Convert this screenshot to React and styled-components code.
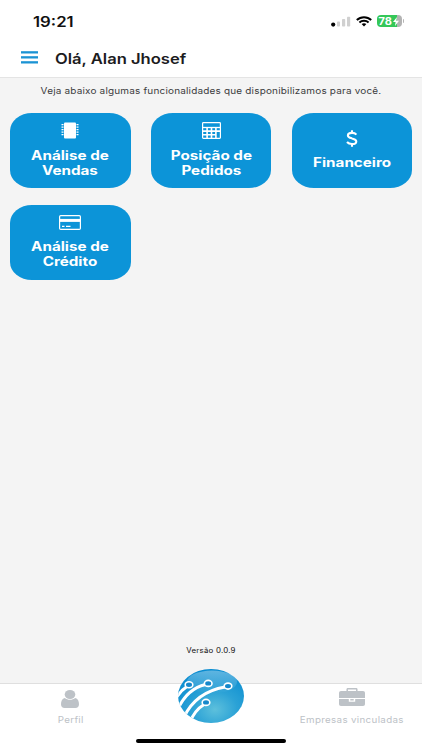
import React from "react"
import styled, { createGlobalStyle } from "styled-components"

const GlobalStyle = createGlobalStyle`
  body {
    margin: 0;
    font-family: Inter, "Liberation Sans", sans-serif;
  }

  * {
    box-sizing: border-box;
  }

  svg {
    display: block;
  }
`

const Screen = styled.div`
  width: 422px;
  height: 750px;
  display: flex;
  flex-direction: column;
  overflow: hidden;
  background: #f4f4f4;
`

const Wide = styled.span`
  display: block;
  white-space: nowrap;
  transform: scaleX(${p => p.$by || 1.217});
  transform-origin: ${p => p.$from || "center"};
`

const Header = styled.header`
  height: 78px;
  background: #fff;
  border-bottom: 1px solid #e4e4e4;
`

const StatusBar = styled.div`
  height: 41px;
  padding: 1px 18px 0 33px;
  display: flex;
  align-items: center;
  justify-content: space-between;
`

const Time = styled.div`
  font-size: 14.2px;
  font-weight: 600;
  color: #111;
`

const StatusIcons = styled.div`
  display: flex;
  align-items: center;
  gap: 5px;
`

const Battery = styled.div`
  display: flex;
  align-items: center;
  gap: 1px;

  &::after {
    content: "";
    width: 1.5px;
    height: 4px;
    border-radius: 0 2px 2px 0;
    background: #b5b5b5;
  }
`

const Charge = styled.div`
  width: 25px;
  height: 12px;
  border-radius: 4px;
  background: linear-gradient(90deg, #34c759 78%, #b3b3b3 78%);
  color: #fff;
  font-size: 10px;
  font-weight: 700;
  display: flex;
  align-items: center;
  justify-content: center;
  gap: 1px;
`

const TitleBar = styled.div`
  height: 36px;
  padding-left: 21px;
  display: flex;
  align-items: center;
  gap: 17px;

  svg {
    margin-bottom: 3px;
  }
`

const Title = styled.h1`
  margin: 0;
  font-size: 14.3px;
  line-height: 20px;
  font-weight: 600;
  color: #1c1c1e;
`

const Main = styled.main`
  flex: 1;
  display: flex;
  flex-direction: column;
`

const Intro = styled.p`
  margin: 6px 0 14.5px;
  line-height: 14px;
  font-size: 8.6px;
  letter-spacing: 0.15px;
  text-align: center;
  color: #3c3c3e;
`

const Grid = styled.div`
  padding: 0 10px;
  display: grid;
  grid-template-columns: repeat(3, 120.5px);
  justify-content: space-between;
  row-gap: 17px;
`

const Card = styled.button`
  height: 75px;
  padding: 0;
  border: none;
  border-radius: 22px / 18px;
  background: #0c94d8;
  color: #fff;
  font-family: inherit;
  font-size: 12.5px;
  line-height: 15px;
  font-weight: 700;
  display: flex;
  flex-direction: column;
  align-items: center;
  justify-content: center;
  gap: 8.5px;
  cursor: pointer;
`

const Version = styled.div`
  margin-top: auto;
  padding-bottom: 26px;
  line-height: 12px;
  font-size: 7.1px;
  letter-spacing: 0.2px;
  text-align: center;
  color: #111;
`

const TabBar = styled.nav`
  height: 67px;
  background: #fff;
  border-top: 1px solid #dfdfdf;
  display: grid;
  grid-template-columns: repeat(3, 1fr);
  grid-template-rows: 55px 4px;
`

const Tab = styled.div`
  padding-bottom: 13px;
  display: flex;
  flex-direction: column;
  align-items: center;
  justify-content: flex-end;
  gap: ${p => p.$gap}px;
  color: #bdc2c7;
  font-size: 8.8px;
  line-height: 13px;
  letter-spacing: 0.3px;
`

const LogoTab = styled.div`
  margin-top: -16px;
  display: flex;
  justify-content: center;
`

const HomeIndicator = styled.div`
  grid-column: 1 / -1;
  justify-self: center;
  width: 150px;
  height: 4px;
  border-radius: 3px;
  background: #000;
`

const Signal = () => (
  <svg width="20" height="11" viewBox="0 0 20 11">
    <circle cx="2.2" cy="8.6" r="2.1" fill="#000" />
    <rect x="6" y="5.5" width="3" height="5" rx="0.8" fill="#d0d0d0" />
    <rect x="11" y="3" width="3.2" height="7.5" rx="0.8" fill="#d0d0d0" />
    <rect x="16" y="0.8" width="3.2" height="9.7" rx="0.8" fill="#d0d0d0" />
  </svg>
)

const Wifi = () => (
  <svg width="16" height="11" viewBox="0 0 16 11" fill="none" stroke="#000" strokeWidth="2">
    <path d="M0.8 4 C4.8 0.2 11.2 0.2 15.2 4" />
    <path d="M3.4 6.5 C6 4.2 10 4.2 12.6 6.5" />
    <path d="M5.6 8.1 Q8 6.2 10.4 8.1 L8 10.4 Z" fill="#000" stroke="none" />
  </svg>
)

const Bolt = () => (
  <svg width="6" height="9" viewBox="0 0 6 9" fill="#fff">
    <path d="M4 0 L0 5 H2.6 L2 9 L6 3.8 H3.3 Z" />
  </svg>
)

const Menu = () => (
  <svg width="17" height="13" viewBox="0 0 17 13" fill="#1b93d4">
    <rect y="0.2" width="17" height="2.3" />
    <rect y="5.2" width="17" height="2.3" />
    <rect y="10.2" width="17" height="2.3" />
  </svg>
)

const Chip = () => (
  <svg width="18" height="17" viewBox="0 0 18 17" fill="#fff">
    <rect x="3" y="0.5" width="12" height="16" rx="1" />
    {[2.2, 4.7, 7.2, 9.7, 12.2].map(y => (
      <path key={y} d={`M0.5 ${y + 0.5} H2.5 M15.5 ${y + 0.5} H17.5`} stroke="#fff" strokeWidth="1.3" />
    ))}
  </svg>
)

const Calculator = () => (
  <svg width="19" height="17" viewBox="0 0 19 17" fill="none" stroke="#fff">
    <rect x="0.6" y="0.6" width="17.8" height="15.8" rx="0.8" strokeWidth="1.2" />
    <path d="M0.6 5.5 H18.4" strokeWidth="1.3" />
    <path d="M5.1 5.5 V16 M9.5 5.5 V16 M13.9 5.5 V16" strokeWidth="1.6" />
    <path d="M0.6 9.1 H18.4 M0.6 12.8 H13.9" strokeWidth="1.6" />
  </svg>
)

const Dollar = () => (
  <svg width="12" height="17" viewBox="0 0 12 17" fill="none" stroke="#fff" strokeWidth="2.1">
    <path d="M10.4 4.6 C9.3 3.3 7.8 2.9 6 2.9 C3.4 2.9 1.9 3.9 1.9 5.5 C1.9 7.4 3.7 7.8 6 8.4 C8.6 9 10.3 9.6 10.3 11.4 C10.3 13.1 8.6 14 6 14 C3.9 14 2.2 13.4 1 12" />
    <path d="M6 0.3 V3 M6 14 V16.7" />
  </svg>
)

const CreditCard = () => (
  <svg width="22" height="15" viewBox="0 0 22 15" fill="none" stroke="#fff">
    <rect x="0.6" y="0.6" width="20.8" height="13.8" rx="1.2" strokeWidth="1.2" />
    <path d="M0.6 5.4 H21.4" strokeWidth="3" />
    <path d="M3 11.4 H5.5 M7 11.4 H11.5" strokeWidth="1.2" />
  </svg>
)

const Person = () => (
  <svg width="18" height="18" viewBox="0 0 18 18" fill="#bdc2c7">
    <path d="M3.8 8 C1 8.7 0 11.3 0 14.3 C0 16.7 1.3 18 3.6 18 H14.4 C16.7 18 18 16.7 18 14.3 C18 11.3 17 8.7 14.2 8 C12.8 9.1 11 9.8 9 9.8 C7 9.8 5.2 9.1 3.8 8 Z" />
    <ellipse cx="9" cy="4.5" rx="5.3" ry="4.5" />
  </svg>
)

const Briefcase = () => (
  <svg width="26" height="18" viewBox="0 0 26 18">
    <path d="M8.2 3.5 V1.3 Q8.2 0.7 9 0.7 H17 Q17.8 0.7 17.8 1.3 V3.5" fill="none" stroke="#bdc2c7" strokeWidth="1.5" />
    <path d="M2 3 H24 Q26 3 26 4.8 V9.9 H0 V4.8 Q0 3 2 3 Z M0 10.9 H9.8 V13.7 H16.2 V10.9 H26 V16.3 Q26 18 24 18 H2 Q0 18 0 16.3 Z M11.3 10.9 H14.7 V12.5 H11.3 Z" fill="#bdc2c7" />
  </svg>
)

const Logo = () => (
  <svg width="68" height="56" viewBox="0 0 68 56">
    <defs>
      <radialGradient id="globe" cx="0.56" cy="0.75" r="0.75">
        <stop offset="0" stopColor="#5dc0dc" />
        <stop offset="0.45" stopColor="#2ba2d6" />
        <stop offset="1" stopColor="#078bd0" />
      </radialGradient>
      <linearGradient id="shine" x2="0" y2="1">
        <stop offset="0" stopColor="#fff" stopOpacity="0.35" />
        <stop offset="1" stopColor="#fff" stopOpacity="0" />
      </linearGradient>
      <clipPath id="disc">
        <ellipse cx="34" cy="28" rx="33" ry="27" />
      </clipPath>
    </defs>
    <ellipse cx="34" cy="28" rx="33" ry="27" fill="url(#globe)" />
    <ellipse cx="35" cy="14" rx="25" ry="11.5" fill="url(#shine)" />
    <g clipPath="url(#disc)" fill="none" stroke="#fff">
      <path d="M-2 32 Q3 23 10 18.5" strokeWidth="2.8" />
      <path d="M1 41 Q10 21 28.5 16.5" strokeWidth="3" />
      <path d="M7 49 Q19 24 48 19" strokeWidth="3.1" />
      <path d="M13 54 Q18 42 27 36.5" strokeWidth="3" />
    </g>
    <g fill="#1688cb" stroke="#fff" strokeWidth="1.6">
      <ellipse cx="12" cy="16.8" rx="3.8" ry="3" />
      <ellipse cx="31.2" cy="15.4" rx="3.8" ry="3" />
      <ellipse cx="51" cy="18.1" rx="3.8" ry="3" />
      <ellipse cx="29" cy="34.4" rx="3.8" ry="3" />
    </g>
  </svg>
)

const features = [
  { icon: <Chip />, lines: ["Análise de", "Vendas"] },
  { icon: <Calculator />, lines: ["Posição de", "Pedidos"] },
  { icon: <Dollar />, lines: ["Financeiro"] },
  { icon: <CreditCard />, lines: ["Análise de", "Crédito"] },
]

export default function App() {
  return (
    <Screen>
      <GlobalStyle />
      <Header>
        <StatusBar>
          <Time><Wide $from="left" $by={1.18}>19:21</Wide></Time>
          <StatusIcons>
            <Signal />
            <Wifi />
            <Battery>
              <Charge>
                <Wide $by={1.1}>78</Wide>
                <Bolt />
              </Charge>
            </Battery>
          </StatusIcons>
        </StatusBar>
        <TitleBar>
          <Menu />
          <Title><Wide $from="left" $by={1.16}>Olá, Alan Jhosef</Wide></Title>
        </TitleBar>
      </Header>
      <Main>
        <Intro><Wide $by={1.162}>Veja abaixo algumas funcionalidades que disponibilizamos para você.</Wide></Intro>
        <Grid>
          {features.map(({ icon, lines }) => (
            <Card key={lines.join(" ")}>
              {icon}
              <div>
                {lines.map(line => <Wide key={line}>{line}</Wide>)}
              </div>
            </Card>
          ))}
        </Grid>
        <Version><Wide $by={1.11}>Versão 0.0.9</Wide></Version>
      </Main>
      <TabBar>
        <Tab $gap={5}>
          <Person />
          <Wide $by={1.11}>Perfil</Wide>
        </Tab>
        <LogoTab><Logo /></LogoTab>
        <Tab $gap={7}>
          <Briefcase />
          <Wide $by={1.11}>Empresas vinculadas</Wide>
        </Tab>
        <HomeIndicator />
      </TabBar>
    </Screen>
  )
}
